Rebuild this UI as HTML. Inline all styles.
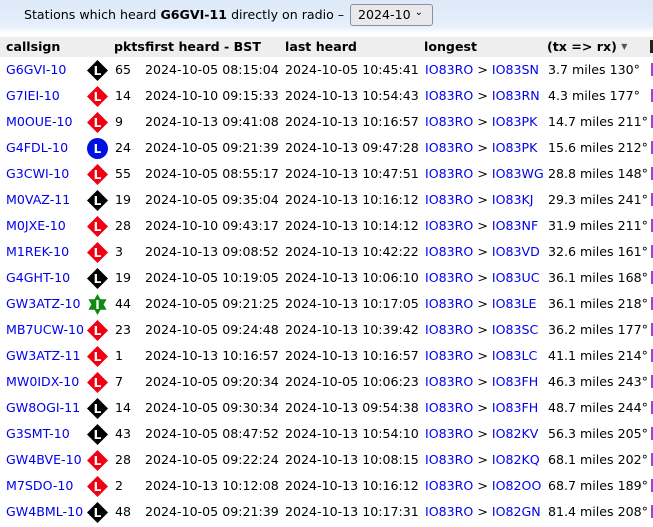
<!DOCTYPE html>
<html><head><meta charset="utf-8"><style>
*{margin:0;padding:0;box-sizing:border-box}
body{width:653px;height:527px;overflow:hidden;background:#fff;font-family:"DejaVu Sans",Verdana,sans-serif;font-size:12.6px;color:#000;position:relative}
.top{position:absolute;left:0;top:0;width:653px;height:33px;background:linear-gradient(#dde9f8,#e6effb 80%,#fff)}
.top .t{position:absolute;left:24px;top:7px;white-space:nowrap}
.sel{position:absolute;left:350px;top:4px;width:83px;height:22px;border:1px solid #8f8f9d;border-radius:3px;background:#e9e9ed;padding:2px 0 0 7px}
.sel span{position:absolute;right:9px;top:2px;font-size:10px}
.hd{position:absolute;left:0;top:37px;width:653px;height:20px;background:#eee;font-weight:bold}
.c{position:absolute;white-space:nowrap}
.row{position:absolute;left:0;width:653px;height:26px}
.row .c{top:5px}
a{color:#0000ee;text-decoration:none}
svg{position:absolute;left:87px;top:3px}
.p{position:absolute;left:651px;top:6px;width:3px;height:13px;background:#a040e0}
</style></head><body>
<div class="top"><div class="t">Stations which heard <b>G6GVI-11</b> directly on radio –</div><div class="sel">2024-10<span>⌄</span></div></div>
<div class="hd"><span class="c" style="left:6px;top:2px">callsign</span><span class="c" style="left:114px;top:2px">pkts</span><span class="c" style="left:145px;top:2px">first heard - BST</span><span class="c" style="left:285px;top:2px">last heard</span><span class="c" style="left:424px;top:2px">longest</span><span class="c" style="left:547px;top:2px">(tx =&gt; rx) <span style="font-size:8px;vertical-align:2px;color:#555">▼</span></span><span style="position:absolute;left:650px;top:3px;width:3px;height:13px;background:#222"></span></div>
<div id="rows"></div>
<script>
var d=[["G6GVI-10","k",65,"2024-10-05 08:15:04","2024-10-05 10:45:41","IO83SN","3.7 miles 130°"],
["G7IEI-10","r",14,"2024-10-10 09:15:33","2024-10-13 10:54:43","IO83RN","4.3 miles 177°"],
["M0OUE-10","r",9,"2024-10-13 09:41:08","2024-10-13 10:16:57","IO83PK","14.7 miles 211°"],
["G4FDL-10","b",24,"2024-10-05 09:21:39","2024-10-13 09:47:28","IO83PK","15.6 miles 212°"],
["G3CWI-10","r",55,"2024-10-05 08:55:17","2024-10-13 10:47:51","IO83WG","28.8 miles 148°"],
["M0VAZ-11","k",19,"2024-10-05 09:35:04","2024-10-13 10:16:12","IO83KJ","29.3 miles 241°"],
["M0JXE-10","r",28,"2024-10-10 09:43:17","2024-10-13 10:14:12","IO83NF","31.9 miles 211°"],
["M1REK-10","r",3,"2024-10-13 09:08:52","2024-10-13 10:42:22","IO83VD","32.6 miles 161°"],
["G4GHT-10","k",19,"2024-10-05 10:19:05","2024-10-13 10:06:10","IO83UC","36.1 miles 168°"],
["GW3ATZ-10","g",44,"2024-10-05 09:21:25","2024-10-13 10:17:05","IO83LE","36.1 miles 218°"],
["MB7UCW-10","r",23,"2024-10-05 09:24:48","2024-10-13 10:39:42","IO83SC","36.2 miles 177°"],
["GW3ATZ-11","r",1,"2024-10-13 10:16:57","2024-10-13 10:16:57","IO83LC","41.1 miles 214°"],
["MW0IDX-10","r",7,"2024-10-05 09:20:34","2024-10-05 10:06:23","IO83FH","46.3 miles 243°"],
["GW8OGI-11","k",14,"2024-10-05 09:30:34","2024-10-13 09:54:38","IO83FH","48.7 miles 244°"],
["G3SMT-10","k",43,"2024-10-05 08:47:52","2024-10-13 10:54:10","IO82KV","56.3 miles 205°"],
["GW4BVE-10","r",28,"2024-10-05 09:22:24","2024-10-13 10:08:15","IO82KQ","68.1 miles 202°"],
["M7SDO-10","r",2,"2024-10-13 10:12:08","2024-10-13 10:16:12","IO82OO","68.7 miles 189°"],
["GW4BML-10","k",48,"2024-10-05 09:21:39","2024-10-13 10:17:31","IO82GN","81.4 miles 208°"]];
function ic(t){var col={k:"#000",r:"#f00010",b:"#0010e0",g:"#108a10"}[t];var L=t=="g"?"I":"L";var sh;
if(t=="b")sh='<circle cx="10.5" cy="10.5" r="10.5" fill="'+col+'"/>';
else if(t=="g")sh='<polygon points="10.5,0 13.5,5.2 19.6,5.2 16.6,10.5 19.6,15.8 13.5,15.8 10.5,21 7.5,15.8 1.4,15.8 4.4,10.5 1.4,5.2 7.5,5.2" fill="'+col+'"/>';
else sh='<polygon points="10.5,0 21,10.5 10.5,21 0,10.5" fill="'+col+'"/>';
return '<svg width="21" height="21" viewBox="0 0 21 21">'+sh+'<text x="10.5" y="15" text-anchor="middle" font-family="DejaVu Sans" font-weight="bold" font-size="12" fill="#fff">'+L+'</text></svg>';}
var h="";d.forEach(function(r,i){h+='<div class="row" style="top:'+(57+i*26)+'px"><a class="c" style="left:6px">'+r[0]+'</a>'+ic(r[1])+'<span class="c" style="left:115px">'+r[2]+'</span><span class="c" style="left:145px">'+r[3]+'</span><span class="c" style="left:285px">'+r[4]+'</span><span class="c" style="left:425px"><a>IO83RO</a> &gt; <a>'+r[5]+'</a></span><span class="c" style="left:548px">'+r[6]+'</span><span class="p"></span></div>';});
document.getElementById("rows").innerHTML=h;
</script>
</body></html>
